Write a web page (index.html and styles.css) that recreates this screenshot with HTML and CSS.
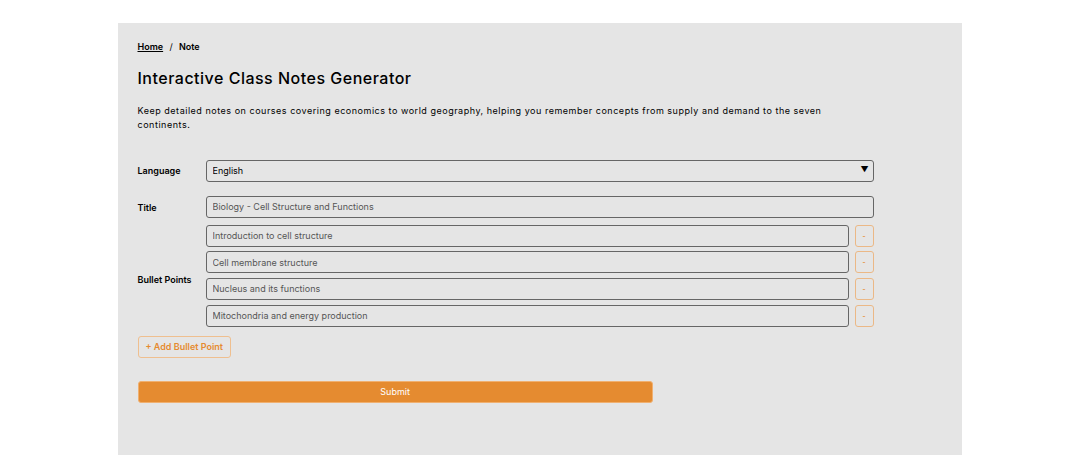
FILE: index.html
```html
<!DOCTYPE html>
<html lang="en">
<head>
    <meta charset="UTF-8">
    <meta name="viewport" content="width=device-width, initial-scale=1.0">
    <title>Interactive Class Notes Generator</title>
    <link rel="stylesheet" href="styles.css">
</head>
<body>
    <div class="panel">
        <nav class="crumbs">
            <a href="#">Home</a>
            <span class="sep">/</span>
            <span>Note</span>
        </nav>
        <h1>Interactive Class Notes Generator</h1>
        <p class="intro">Keep detailed notes on courses covering economics to world geography, helping you remember concepts from supply and demand to the seven continents.</p>

        <form id="notesForm" class="notes-form">
            <div class="row">
                <label for="language">Language</label>
                <div class="select-wrap">
                    <select id="language">
                        <option>English</option>
                        <option>Spanish</option>
                        <option>French</option>
                    </select>
                </div>
            </div>
            <div class="row">
                <label for="title">Title</label>
                <input type="text" id="title" value="Biology - Cell Structure and Functions">
            </div>
            <div class="row">
                <label class="bullets-label">Bullet Points</label>
                <div class="bullets" id="bullets">
                    <div class="bullet">
                        <input type="text" value="Introduction to cell structure">
                        <button type="button" class="remove">-</button>
                    </div>
                    <div class="bullet">
                        <input type="text" value="Cell membrane structure">
                        <button type="button" class="remove">-</button>
                    </div>
                    <div class="bullet">
                        <input type="text" value="Nucleus and its functions">
                        <button type="button" class="remove">-</button>
                    </div>
                    <div class="bullet">
                        <input type="text" value="Mitochondria and energy production">
                        <button type="button" class="remove">-</button>
                    </div>
                </div>
            </div>
            <button type="button" class="add" id="addBullet">+ Add Bullet Point</button>
            <button type="submit" class="submit">Submit</button>
        </form>
    </div>
    <script>
        const bullets = document.getElementById("bullets");

        bullets.addEventListener("click", function (e) {
            if (e.target.classList.contains("remove")) {
                e.target.parentElement.remove();
            }
        });

        document.getElementById("addBullet").addEventListener("click", function () {
            const row = document.createElement("div");
            row.className = "bullet";
            row.innerHTML = '<input type="text" placeholder="New bullet point"><button type="button" class="remove">-</button>';
            bullets.appendChild(row);
        });

        document.getElementById("notesForm").addEventListener("submit", function (e) {
            e.preventDefault();
        });
    </script>
</body>
</html>
```

FILE: styles.css
```css
body {
    font-family: Inter, 'Liberation Sans', Arial, sans-serif;
    margin: 0;
    padding: 23px 0 0;
    background: #fff;
    color: #000;
}
.panel {
    background: #e5e5e5;
    width: 844px;
    box-sizing: border-box;
    min-height: 432px;
    margin: 0 auto;
    padding: 18px 20px 40px;
}
.crumbs {
    font-size: 9px;
    font-weight: 600;
    margin-bottom: 16px;
}
.crumbs a {
    color: #000;
}
.crumbs .sep {
    margin: 0 4px;
    font-weight: 400;
}
h1 {
    font-size: 16px;
    font-weight: 500;
    letter-spacing: 0.5px;
    margin: 0 0 16px;
}
.intro {
    font-size: 9px;
    line-height: 14px;
    letter-spacing: 0.52px;
    max-width: 700px;
    margin: 0 0 26px;
}
.notes-form {
    width: 736px;
}
.row {
    display: flex;
    align-items: center;
    margin-bottom: 14px;
}
.row:nth-child(2) {
    margin-bottom: 7px;
}
.row label {
    width: 68px;
    flex-shrink: 0;
    font-size: 9px;
    font-weight: 600;
    margin-top: 1px;
}
.row .bullets-label {
    margin-top: 7px;
}
.row > input,
.select-wrap {
    flex: 1;
}
input, select {
    font-family: inherit;
    font-size: 9px;
    height: 22px;
    padding: 0 6px;
    border: 1px solid #666;
    border-radius: 3px;
    background: transparent;
    color: #555;
    box-sizing: border-box;
    width: 100%;
}
.select-wrap {
    position: relative;
}
select {
    appearance: none;
    color: #000;
    outline: none;
}
.select-wrap::after {
    content: "\25BC";
    position: absolute;
    right: 5px;
    top: 6px;
    font-size: 8px;
    pointer-events: none;
}
.bullets {
    flex: 1;
    display: flex;
    flex-direction: column;
    gap: 4.7px;
}
.bullet {
    display: flex;
    gap: 6px;
}
.bullet input {
    flex: 1;
}
.remove {
    width: 19px;
    height: 22px;
    flex-shrink: 0;
    padding: 0;
    border: 1px solid #ebb886;
    border-radius: 3px;
    background: transparent;
    color: #e58b30;
    font-size: 9px;
    cursor: pointer;
}
.add {
    display: block;
    margin: -5px 0 23px;
    height: 22px;
    padding: 0 7px;
    border: 1px solid #efbf8f;
    border-radius: 3px;
    background: transparent;
    color: #e58b30;
    font-family: inherit;
    font-size: 9px;
    font-weight: 600;
    cursor: pointer;
}
.submit {
    display: block;
    width: 70%;
    height: 22px;
    border: 1px solid #f0b070;
    border-radius: 3px;
    background: #e58b30;
    color: #fff;
    font-family: inherit;
    font-size: 9px;
    cursor: pointer;
}
```
